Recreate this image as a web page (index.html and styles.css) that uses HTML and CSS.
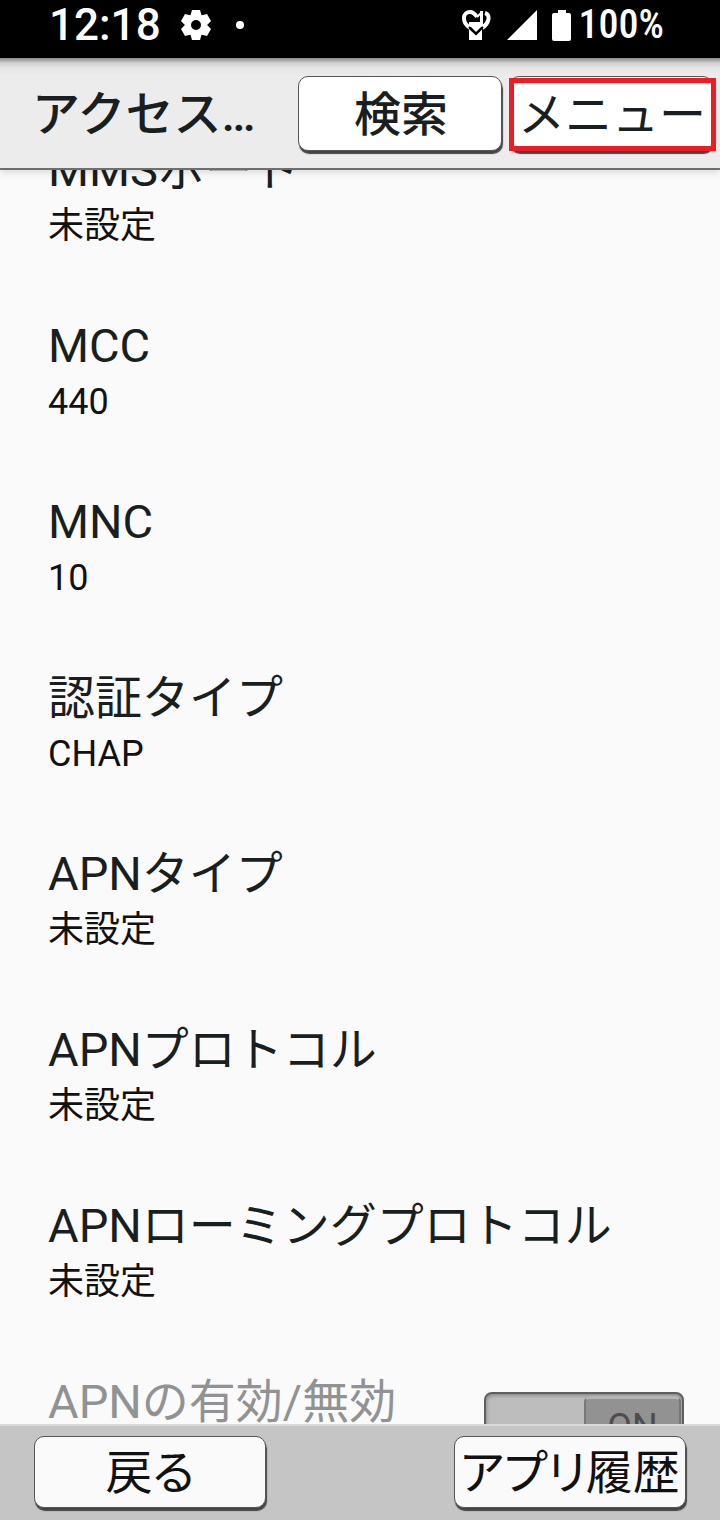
FILE: index.html
```
<!DOCTYPE html>
<html lang="ja">
<head>
    <meta charset="UTF-8">
    <meta name="viewport" content="width=device-width, initial-scale=1.0">
    <title>アクセスポイントの編集</title>
    <link rel="stylesheet" href="styles.css">
</head>
<body>
    <div class="status-bar">
        <span class="clock">12:18</span>
        <svg class="icon-gear" viewBox="0 0 36 36" width="36" height="36" aria-hidden="true">
            <g fill="#fff">
                <circle cx="18" cy="18" r="11"/>
                <path id="tooth" d="M14 3h8l2 7H12z"/>
                <use href="#tooth" transform="rotate(60 18 18)"/>
                <use href="#tooth" transform="rotate(120 18 18)"/>
                <use href="#tooth" transform="rotate(180 18 18)"/>
                <use href="#tooth" transform="rotate(240 18 18)"/>
                <use href="#tooth" transform="rotate(300 18 18)"/>
            </g>
            <circle cx="18" cy="18" r="5" fill="#000"/>
        </svg>
        <span class="dot"></span>
        <div class="status-right">
            <svg width="30" height="32" viewBox="0 0 30 32" aria-hidden="true">
                <path fill="#fff" d="M8 20l7 6 6-6v11H8z"/>
                <path fill="#fff" d="M8 13h11V2h3v14l-7 7-7-7z"/>
                <path fill="none" stroke="#fff" stroke-width="4" d="M9 19C4 15 3 13 3 9c0-4 3-6 6-6s5 2 7 5M24 4c4 1 4 5 3 8s-3 5-6 7"/>
                <path fill="none" stroke="#000" stroke-width="2" d="M8 18l7 7 7-7"/>
                <path fill="none" stroke="#fff" stroke-width="2" d="M16 8l4-4"/>
            </svg>
            <svg class="icon-signal" width="30" height="30" viewBox="0 0 30 30" aria-hidden="true">
                <path fill="#fff" d="M0 30L30 0v30z"/>
            </svg>
            <svg class="icon-battery" width="19" height="31" viewBox="0 0 19 31" aria-hidden="true">
                <path fill="#fff" d="M6 0h8v3h3q2 0 2 2v24q0 2-2 2H2q-2 0-2-2V5q0-2 2-2h4z"/>
            </svg>
            <span class="battery-level">100%</span>
        </div>
    </div>

    <header>
        <h1>アクセス…</h1>
        <button type="button" class="btn search">検索</button>
        <button type="button" class="btn menu">メニュー</button>
    </header>

    <main>
        <ul class="settings">
            <li><h2>MMSポート</h2><p>未設定</p></li>
            <li><h2>MCC</h2><p>440</p></li>
            <li><h2>MNC</h2><p>10</p></li>
            <li><h2>認証タイプ</h2><p>CHAP</p></li>
            <li><h2>APNタイプ</h2><p>未設定</p></li>
            <li><h2>APNプロトコル</h2><p>未設定</p></li>
            <li><h2>APNローミングプロトコル</h2><p>未設定</p></li>
            <li class="with-switch">
                <label class="switch-label" for="apnEnabled">APNの有効/無効</label>
                <div class="switch">
                    <input type="checkbox" id="apnEnabled" checked disabled>
                    <span class="thumb">ON</span>
                </div>
            </li>
        </ul>
    </main>

    <footer>
        <button type="button" class="btn">戻る</button>
        <button type="button" class="btn">アプリ履歴</button>
    </footer>
</body>
</html>
```
FILE: styles.css
```
* {
    box-sizing: border-box;
}

body {
    margin: 0;
    height: 100vh;
    display: flex;
    flex-direction: column;
    overflow: hidden;
    background-color: #fafafa;
    color: #191e20;
    font-family: Roboto, "Noto Sans CJK JP", sans-serif;
}

/* status bar */
.status-bar {
    flex: none;
    height: 58px;
    padding: 0 56px 8px 49px;
    display: flex;
    align-items: center;
    background-color: #000;
    color: #fff;
}

.clock {
    font-size: 44px;
    line-height: 48px;
    font-weight: 500;
}

.icon-gear {
    margin-left: 17px;
}

.dot {
    width: 8px;
    height: 8px;
    margin-left: 22px;
    border-radius: 50%;
    background-color: #fff;
}

.status-right {
    margin-left: auto;
    display: flex;
    align-items: center;
}

.icon-signal {
    margin-left: 16px;
}

.icon-battery {
    margin: 0 8px 0 15px;
}

.battery-level {
    font-family: "Roboto Condensed", "Liberation Sans Narrow", Roboto, sans-serif;
    font-size: 40px;
    line-height: 48px;
    font-weight: 500;
}

/* title bar */
header {
    flex: none;
    height: 112px;
    padding: 18px 7px 16px 32px;
    display: flex;
    align-items: flex-start;
    gap: 7px;
    background: linear-gradient(#8a8a8a, #cfcfcf 5px, #e6e6e6 10px, #ececec 18px);
    border-bottom: 2px solid #6e6e6e;
    box-shadow: 0 2px 8px rgba(0, 0, 0, 0.15);
    z-index: 1;
}

h1 {
    flex: 1;
    margin: 0;
    font-size: 48px;
    line-height: 78px;
    font-weight: 500;
    white-space: nowrap;
}

.btn {
    padding: 0;
    border: 1px solid #555;
    border-radius: 10px;
    background-color: #fff;
    box-shadow: 1px 3px 1px #444;
    color: #191e20;
    font-family: inherit;
    font-size: 47px;
    line-height: 72px;
    white-space: nowrap;
    cursor: pointer;
}

header .btn {
    width: 204px;
    height: 75px;
    padding: 2px 0 0 2px;
}

.search {
    font-weight: 500;
}

.menu {
    position: relative;
}

/* highlight frame around the menu button */
.menu::after {
    content: "";
    position: absolute;
    top: 1px;
    right: -4px;
    bottom: -1px;
    left: -1px;
    border: 5px solid #ee1c25;
}

/* settings list */
main {
    flex: 1;
    min-height: 0;
    overflow: hidden;
}

.settings {
    list-style: none;
    margin: -60px 0 0;
    padding: 0;
}

.settings li {
    height: 176px;
    padding: 32px 36px 32px 48px;
}

.settings h2,
.switch-label {
    margin: 0;
    font-size: 47px;
    line-height: 56px;
    font-weight: 400;
}

.settings p {
    margin: 0;
    font-size: 36px;
    line-height: 56px;
    color: #111;
}

.with-switch {
    display: flex;
    justify-content: space-between;
    align-items: flex-start;
}

.switch-label {
    color: #919293;
}

.switch {
    display: grid;
    grid-template-columns: 1fr 1fr;
    width: 200px;
    height: 76px;
    margin-top: 18px;
}

.switch input {
    grid-area: 1 / 1 / 2 / 3;
    appearance: none;
    margin: 0;
    border: 2px solid #5f5f5f;
    border-radius: 8px;
    background-color: #bdbdbd;
    box-shadow: inset 0 1px 4px #777;
}

.thumb {
    grid-area: 1 / 2;
    margin: 4px 3px 4px 0;
    border: 2px solid #777;
    border-top: 3px solid #b4b4b4;
    border-radius: 6px;
    background-color: #929292;
    color: #4d4d4d;
    font-size: 36px;
    line-height: 56px;
    text-align: center;
}

/* bottom keys */
footer {
    flex: none;
    height: 96px;
    padding: 10px 34px;
    display: flex;
    justify-content: space-between;
    align-items: flex-start;
    background-color: #c5c5c5;
    border-top: 2px solid #d9d9d9;
}

footer .btn {
    width: 232px;
    height: 72px;
    background-color: #fafafa;
    color: #111;
    font-feature-settings: "palt";
}
```
